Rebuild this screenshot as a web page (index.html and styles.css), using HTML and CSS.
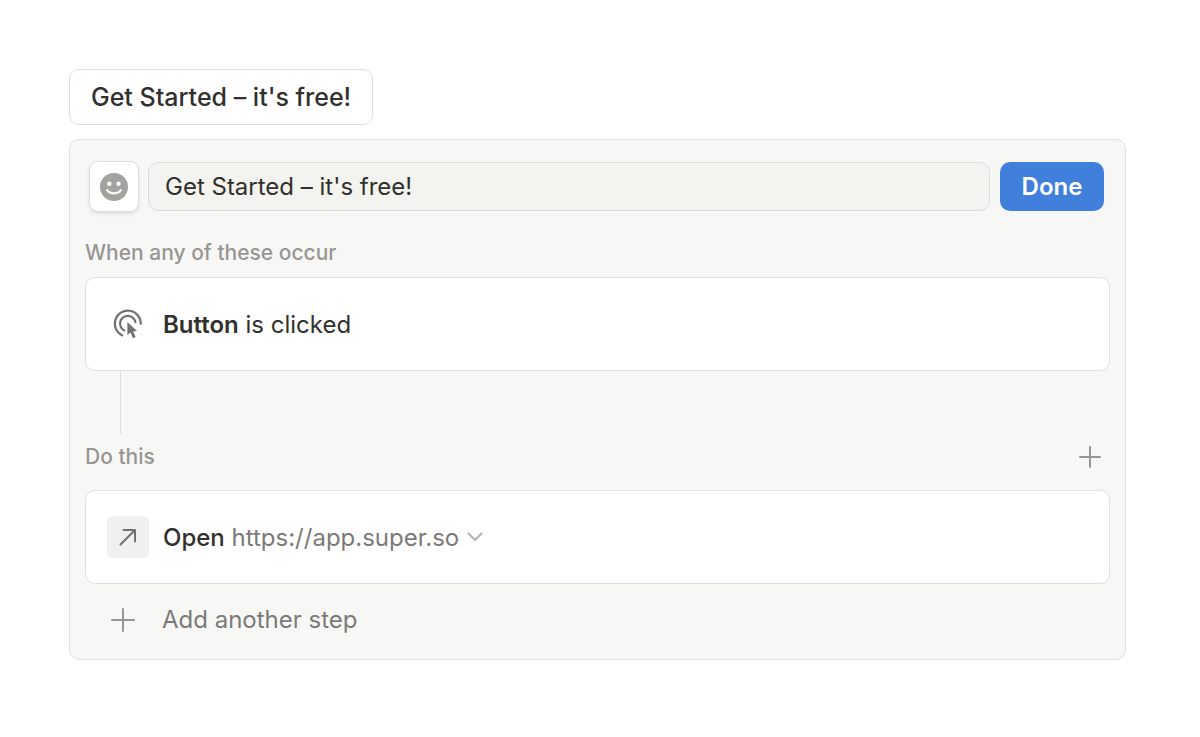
FILE: index.html
```
<!DOCTYPE html>
<html lang="en">
<head>
<meta charset="utf-8">
<meta name="viewport" content="width=device-width, initial-scale=1">
<title>Button automation</title>
<link rel="stylesheet" href="styles.css">
</head>
<body>
<main class="page">
  <button class="preview-button" type="button">Get Started – it's free!</button>
  <section class="panel" aria-label="Button settings">
    <header class="panel-header">
      <button class="emoji-button" type="button" aria-label="Choose icon">
        <svg width="28" height="28" viewBox="0 0 28 28" aria-hidden="true">
          <circle cx="14" cy="14" r="14" fill="#a3a29e"/>
          <circle cx="9.3" cy="10.8" r="2.2" fill="#fff"/>
          <circle cx="18.5" cy="10.8" r="2.2" fill="#fff"/>
          <path d="M7.2 17.2C10 21.4 18 21.4 20.8 17.2" fill="none" stroke="#fff" stroke-width="2.3" stroke-linecap="round"/>
        </svg>
      </button>
      <input class="name-input" type="text" aria-label="Button name" value="Get Started – it's free!">
      <button class="done-button" type="button">Done</button>
    </header>
    <h2 class="label trigger-label">When any of these occur</h2>
    <div class="card">
      <span class="card-icon">
        <svg width="32" height="32" viewBox="0 0 32 32" aria-hidden="true">
          <g fill="none" stroke="#73726e" stroke-width="2.2" stroke-linecap="round">
            <path d="M10.3 27.4A13 13 0 1 1 28.8 15.8"/>
            <path d="M12.2 22.4A7.7 7.7 0 1 1 23.4 14.2"/>
          </g>
          <path d="M15.4 14V27L18.5 24.4L21 30.2L23.6 29.1L21.1 23.4L25 23Z" fill="#73726e"/>
        </svg>
      </span>
      <p class="card-text"><strong>Button</strong> is clicked</p>
    </div>
    <div class="connector"></div>
    <div class="action-row">
      <h2 class="label">Do this</h2>
      <button class="plus-button" type="button" aria-label="Add action">
        <svg width="22" height="22" viewBox="0 0 22 22" aria-hidden="true"><path d="M11 1V21M1 11H21" stroke="#979692" stroke-width="2" stroke-linecap="round"/></svg>
      </button>
    </div>
    <div class="card">
      <span class="card-icon tile">
        <svg width="18" height="18" viewBox="0 0 18 18" aria-hidden="true"><path d="M1.5 16.5L16 2M4.5 2H16V13.5" fill="none" stroke="#73726e" stroke-width="2" stroke-linecap="round" stroke-linejoin="round"/></svg>
      </span>
      <p class="card-text"><span class="verb">Open</span> <a class="url" href="https://app.super.so">https://app.super.so</a></p>
      <button class="chevron-button" type="button" aria-label="Change link">
        <svg width="16" height="10" viewBox="0 0 16 10" aria-hidden="true"><path d="M1.5 1.5L8 8L14.5 1.5" fill="none" stroke="#b2b1ae" stroke-width="2" stroke-linecap="round" stroke-linejoin="round"/></svg>
      </button>
    </div>
    <button class="add-step" type="button">
      <svg width="26" height="26" viewBox="0 0 26 26" aria-hidden="true"><path d="M13 2V24M2 13H24" stroke="#979692" stroke-width="2" stroke-linecap="round"/></svg>
      Add another step
    </button>
  </section>
</main>
</body>
</html>
```

FILE: styles.css
```
* { box-sizing: border-box; }

body {
  margin: 0;
  background: #fff;
  color: #32302c;
  font-family: Inter, "Liberation Sans", sans-serif;
  font-size: 24px;
  line-height: 32px;
}

button, input { font: inherit; color: inherit; margin: 0; }
button { border: 0; padding: 0; background: none; cursor: pointer; }
svg { display: block; }

.page { padding: 69px 74px 68px 69px; }

.preview-button {
  display: block;
  padding: 11px 21px;
  border: 1px solid #dfdfde;
  border-radius: 10px;
  background: #fff;
  font-size: 25px;
  font-weight: 500;
}

.panel {
  margin-top: 14px;
  padding: 22px 15px 3px;
  border: 1px solid #e2e2e0;
  border-radius: 10px;
  background: #f7f7f5;
}

.panel-header {
  display: flex;
  gap: 10px;
  height: 49px;
  margin: 0 6px 0 5px;
}

.emoji-button {
  display: flex;
  flex: none;
  align-items: center;
  justify-content: center;
  width: 48px;
  border-radius: 8px;
  background: #fff;
  box-shadow: 0 0 0 1px #dededc, 0 2px 5px rgba(0, 0, 0, 0.15);
}

.name-input {
  flex: 1;
  min-width: 0;
  padding: 0 16px;
  border: 1px solid #dcdcd8;
  border-radius: 10px;
  background: #f3f4ef;
}

.done-button {
  flex: none;
  min-width: 104px;
  border-radius: 10px;
  background: #4080dc;
  color: #fff;
  font-weight: 600;
}

.label {
  margin: 0;
  color: #979692;
  font-size: 21px;
  font-weight: 500;
  line-height: 30px;
}

.trigger-label { margin: 27px 0 9px; }

.card {
  display: flex;
  align-items: center;
  height: 94px;
  padding: 0 21px;
  border: 1px solid #e0e0de;
  border-radius: 10px;
  background: #fff;
}

.card-icon {
  display: flex;
  flex: none;
  align-items: center;
  justify-content: center;
  width: 42px;
  height: 42px;
  margin-right: 14px;
}

.tile { border-radius: 5px; background: #f0f0ef; }

.card-text { margin: 0; padding-top: 2px; }
.card-text strong { font-weight: 600; }
.verb { font-weight: 500; }
.url { color: #7b7a77; text-decoration: none; }
.chevron-button { margin-left: 8px; }

.connector {
  width: 1px;
  height: 63px;
  margin-left: 35px;
  background: #dcdcda;
}

.action-row {
  display: flex;
  align-items: center;
  justify-content: space-between;
  height: 46px;
  margin-bottom: 10px;
}

.plus-button { margin-right: 9px; }

.add-step {
  display: flex;
  align-items: center;
  gap: 26px;
  height: 72px;
  padding-left: 25px;
  color: #7b7a77;
}
```
